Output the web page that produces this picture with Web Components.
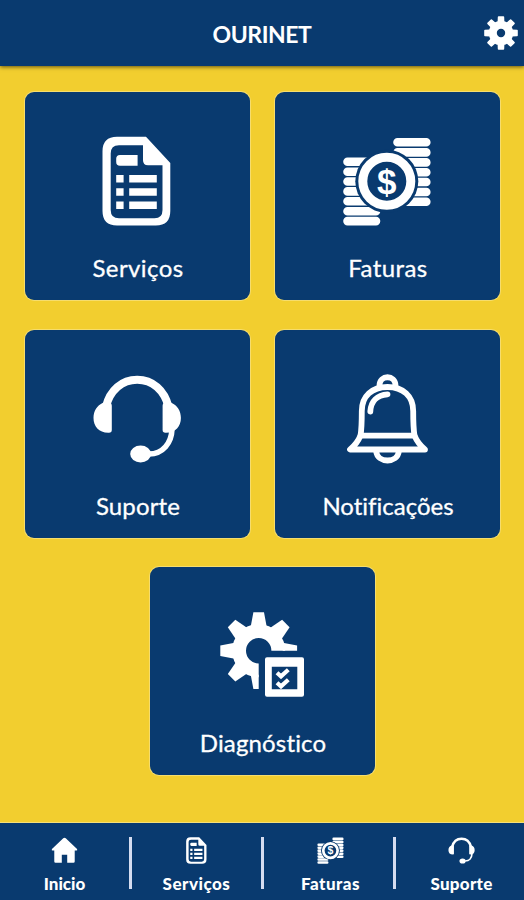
<!DOCTYPE html>
<html lang="pt-BR">
<head>
<meta charset="utf-8">
<meta name="viewport" content="width=device-width, initial-scale=1">
<title>OURINET</title>
<style>
  html,body{margin:0;height:100%}
  body{background:#f2ce2f;font-family:Lato,"Open Sans",sans-serif;color:#fff;overflow:hidden}
</style>
</head>
<body>
<ourinet-app></ourinet-app>

<script>
(() => {
  // eight copies of one tooth around a centre
  const teeth = (cx, cy, d) =>
    [0, 45, 90, 135, 180, 225, 270, 315]
      .map((a) => `<path transform="translate(${cx} ${cy}) rotate(${a})" d="${d}"/>`)
      .join("");

  const coins = (x1, x2, ys) => ys.map((y) => `M${x1} ${y}H${x2}`).join("");

  const ICONS = {
    services: `<svg viewBox="0 0 90 90" aria-hidden="true">
        <path fill="currentColor" fill-rule="evenodd" d="M25 .8H54L78.3 27V75q0 14.500-14.500 14.500H25q-14.500 0-14.500-14.500V15.300Q10.500.8 25 .8z
          M27 9.200q-8.300 0-8.300 8.300V74q0 8.300 8.300 8.300H62.500q8 0 8-8.300V29.200H56q-5 0-5-5V9.200z"/>
        <path fill="currentColor" d="M28 19H45.600V29.700H28q-3.800 0-3.800-3.800V22.800Q24.200 19 28 19z
          M24.200 39h7.400v7.500h-7.400z M24.200 52.300h7.400v7.500h-7.400z M24.200 65.500h7.400v7.500h-7.400z
          M37.200 39h27.600v7.500H37.200z M37.200 52.300h27.600v7.500H37.200z M37.200 65.500h27.600v7.500H37.200z"/>
      </svg>`,
    invoices: `<svg viewBox="0 0 90 90" aria-hidden="true">
        <path fill="none" stroke="currentColor" stroke-width="8.600" stroke-linecap="round"
          d="${coins(55.500, 84.300, [6.300, 16.400])}${coins(60, 84.300, [26.400, 36.200, 46, 56, 65.800])}${coins(5.500, 30, [25.700, 35.700, 45.500, 55.400, 65.300])}${coins(5.500, 34, [75.200, 85.100])}"/>
        <circle cx="44.800" cy="45.300" r="31.500" fill="var(--navy)"/>
        <circle cx="44.800" cy="45.300" r="24" fill="none" stroke="currentColor" stroke-width="9"/>
        <text x="44.800" y="57.500" text-anchor="middle" font-family="Liberation Sans,sans-serif" font-weight="700" font-size="35" fill="currentColor">$</text>
      </svg>`,
    support: `<svg viewBox="0 0 90 90" aria-hidden="true">
        <path fill="none" stroke="currentColor" stroke-width="8" d="M13.800 33C18 16 30 5.800 45.200 5.800S72.400 16 76.600 33"/>
        <path fill="currentColor" d="M11 28.700H17q2.800 0 2.800 3V56q0 2.700-2.800 2.700C7 59 1.500 52.500 1.500 44C1.500 37 5 31.500 11 28.700z
          M79.400 28.700H73.400q-2.800 0-2.800 3V56q0 2.700 2.800 2.700C83.400 59 88.900 52.500 88.900 44C88.900 37 85.400 31.500 79.400 28.700z"/>
        <path fill="none" stroke="currentColor" stroke-width="5.600" d="M80 55C79.500 69 71 80 57 80"/>
        <ellipse cx="48.600" cy="80" rx="10.400" ry="8.500" fill="currentColor"/>
      </svg>`,
    bell: `<svg viewBox="0 0 90 90" aria-hidden="true">
        <g fill="none" stroke="currentColor" stroke-width="5.800" stroke-linecap="round" stroke-linejoin="round">
          <path d="M18.500 61.700C19.600 55 19.800 47 19.800 37C19.800 22 30 13 45.500 13S71.200 22 71.200 37C71.200 47 71.400 55 72.500 61.700z"/>
          <path d="M18.500 61.700Q15 70 8 75.500H83Q76 70 72.500 61.700"/>
          <path d="M34.200 77.500C35.500 89.500 55.500 89.500 56.800 77.500"/>
          <path d="M37.500 11.500C37.500.5 53.500.5 53.500 11.500"/>
          <path d="M28.300 37.500C28.800 27 35.500 21 45.500 20.300"/>
        </g>
      </svg>`,
    diagnostic: `<svg viewBox="0 0 90 90" aria-hidden="true">
        <clipPath id="cut"><path d="M0 0H90V39.700H41.700V90H0z"/></clipPath>
        <g clip-path="url(#cut)" fill="currentColor">
          <circle cx="41.700" cy="39.700" r="19.600" fill="none" stroke="currentColor" stroke-width="13.800"/>
          ${teeth(41.700, 39.700, "M-8-24L-5.300-38.400H5.300L8-24z")}
        </g>
        <path fill="currentColor" fill-rule="evenodd" d="M50 46.300H85q2 0 2 2V83.700q0 2-2 2H50q-2 0-2-2V48.300q0-2 2-2z M54.800 55.700V78.300H80.300V55.700z"/>
        <path fill="none" stroke="currentColor" stroke-width="4.200" d="M60 61.700L64 65.300L71.300 58.700M60 71.700L64 75.300L71.300 68.700"/>
      </svg>`,
    gear: `<svg viewBox="0 0 34 34" aria-hidden="true">
        <circle cx="17" cy="17" r="8.200" fill="none" stroke="currentColor" stroke-width="8"/>
        <g fill="currentColor" stroke="currentColor" stroke-width="1.600" stroke-linejoin="round">
          ${teeth(17, 17, "M-2.600-11L-2.400-16H2.400L2.600-11z")}
        </g>
      </svg>`,
    home: `<svg viewBox="0 0 28 28" aria-hidden="true">
        <path fill="currentColor" d="M14 .8Q14.600.8 15.300 1.400L27 12.400Q27.800 14 26.300 14H24.600V25.500Q24.600 26.800 23.300 26.800H16.800V18.500H11.200V26.800H4.700Q3.400 26.800 3.400 25.500V14H1.700Q.2 14 1 12.400L12.700 1.400Q13.400.8 14 .8z"/>
      </svg>`,
  };

  class OurinetIcon extends HTMLElement {
    connectedCallback() {
      if (this.shadowRoot) return;
      this.attachShadow({ mode: "open" }).innerHTML = `
        <style>
          :host{display:block;flex:none;width:var(--icon-size,90px);height:var(--icon-size,90px)}
          svg{display:block;width:100%;height:100%}
        </style>
        ${ICONS[this.getAttribute("name")] || ""}
      `;
    }
  }

  class OurinetHeader extends HTMLElement {
    connectedCallback() {
      if (this.shadowRoot) return;
      this.attachShadow({ mode: "open" }).innerHTML = `
        <style>
          :host{display:block;flex:none;height:66px;background:var(--navy);box-shadow:0 1px 4px rgba(0,0,0,.6)}
          header{height:100%;box-sizing:border-box;display:grid;grid-template-columns:34px 1fr 34px;align-items:center;padding:0 6px}
          h1{margin:1px 0 0;text-align:center;font-size:23px;line-height:28px;font-weight:700;letter-spacing:-.45px}
          ourinet-icon{--icon-size:34px}
        </style>
        <header><span></span><h1><slot></slot></h1><ourinet-icon name="gear"></ourinet-icon></header>
      `;
    }
  }

  class OurinetTile extends HTMLElement {
    connectedCallback() {
      if (this.shadowRoot) return;
      this.attachShadow({ mode: "open" }).innerHTML = `
        <style>
          :host{
            display:flex;flex-direction:column;align-items:center;box-sizing:border-box;
            width:225px;height:208px;padding-top:44px;border-radius:9px;
            background:var(--navy);box-shadow:0 0 0 1px rgba(255,255,255,.3);
          }
          .label{
            margin-top:27px;padding-left:2px;font-size:24px;line-height:30px;white-space:nowrap;
            letter-spacing:var(--track,0);font-variant-ligatures:none;-webkit-text-stroke:.3px currentColor;
          }
        </style>
        <ourinet-icon name="${this.getAttribute("icon")}"></ourinet-icon>
        <span class="label"><slot></slot></span>
      `;
    }
  }

  class OurinetTab extends HTMLElement {
    connectedCallback() {
      if (this.shadowRoot) return;
      this.attachShadow({ mode: "open" }).innerHTML = `
        <style>
          :host{display:flex;flex-direction:column;align-items:center;--icon-size:27px}
          .label{margin-top:9px;font-size:17px;line-height:22px;font-weight:900;white-space:nowrap;letter-spacing:var(--track,0)}
        </style>
        <ourinet-icon name="${this.getAttribute("icon")}"></ourinet-icon>
        <span class="label"><slot></slot></span>
      `;
    }
  }

  class OurinetApp extends HTMLElement {
    connectedCallback() {
      if (this.shadowRoot) return;
      this.attachShadow({ mode: "open" }).innerHTML = `
        <style>
          :host{--navy:#093a6f;display:flex;flex-direction:column;width:524px;height:900px;background:#f2ce2f}
          main{flex:1;display:grid;grid-template-columns:225px 225px;column-gap:25px;row-gap:30px;align-content:start;justify-content:center;padding-top:26px}
          ourinet-tile[icon="services"],ourinet-tile[icon="invoices"]{--track:.4px}
          ourinet-tile[icon="support"],ourinet-tile[icon="diagnostic"]{--track:.15px}
          .wide{grid-column:1 / -1;justify-self:center;margin-top:-1px}
          nav{
            flex:none;box-sizing:border-box;height:77px;padding-top:14px;
            display:grid;grid-template-columns:129px 3px 129px 3px 129px 3px 129px;align-items:start;
            background:var(--navy);box-shadow:0 -1px 0 rgba(255,255,255,.35);
          }
          ourinet-tab[icon="services"]{--track:.5px}
          ourinet-tab[icon="invoices"]{--track:.5px;padding-left:4px}
          ourinet-tab[icon="support"]{--track:.25px;padding-left:2px}
          i{height:52px;background:#d5dcf0}
        </style>
        <ourinet-header>OURINET</ourinet-header>
        <main>
          <ourinet-tile icon="services">Serviços</ourinet-tile>
          <ourinet-tile icon="invoices">Faturas</ourinet-tile>
          <ourinet-tile icon="support">Suporte</ourinet-tile>
          <ourinet-tile icon="bell">Notificações</ourinet-tile>
          <ourinet-tile class="wide" icon="diagnostic">Diagnóstico</ourinet-tile>
        </main>
        <nav>
          <ourinet-tab icon="home">Inicio</ourinet-tab><i></i>
          <ourinet-tab icon="services">Serviços</ourinet-tab><i></i>
          <ourinet-tab icon="invoices">Faturas</ourinet-tab><i></i>
          <ourinet-tab icon="support">Suporte</ourinet-tab>
        </nav>
      `;
    }
  }

  customElements.define("ourinet-icon", OurinetIcon);
  customElements.define("ourinet-header", OurinetHeader);
  customElements.define("ourinet-tile", OurinetTile);
  customElements.define("ourinet-tab", OurinetTab);
  customElements.define("ourinet-app", OurinetApp);
})();
</script>
</body>
</html>
